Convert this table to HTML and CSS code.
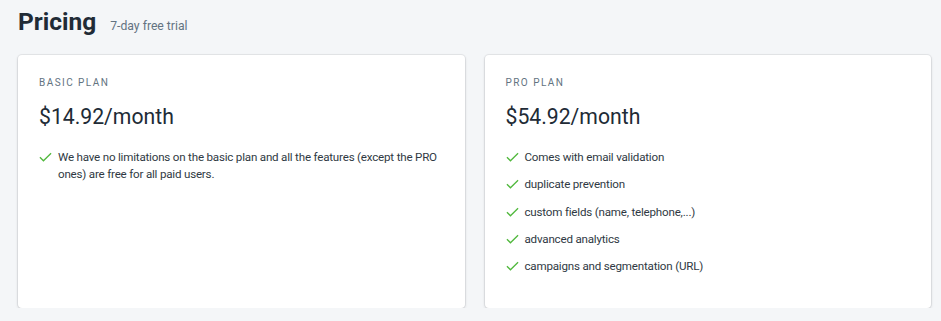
FILE: index.html
```html
<!DOCTYPE html>
<html lang="en">
<head>
<meta charset="utf-8">
<title>Pricing</title>
<link rel="stylesheet" href="styles.css">
</head>
<body>
<div class="page">
  <header class="head">
    <h1 class="title">Pricing</h1>
    <span class="subtitle">7-day free trial</span>
  </header>
  <div class="plans">
    <section class="card">
      <div class="plan-name">BASIC PLAN</div>
      <div class="price">$14.92/month</div>
      <ul class="features">
        <li><svg class="check" viewBox="0 0 14 10"><path d="M1 5.2 L4.8 9 L13 1" /></svg><span>We have no limitations on the basic plan and all the features (except the PRO ones) are free for all paid users.</span></li>
      </ul>
    </section>
    <section class="card">
      <div class="plan-name">PRO PLAN</div>
      <div class="price">$54.92/month</div>
      <ul class="features">
        <li><svg class="check" viewBox="0 0 14 10"><path d="M1 5.2 L4.8 9 L13 1" /></svg><span>Comes with email validation</span></li>
        <li><svg class="check" viewBox="0 0 14 10"><path d="M1 5.2 L4.8 9 L13 1" /></svg><span>duplicate prevention</span></li>
        <li><svg class="check" viewBox="0 0 14 10"><path d="M1 5.2 L4.8 9 L13 1" /></svg><span>custom fields (name, telephone,...)</span></li>
        <li><svg class="check" viewBox="0 0 14 10"><path d="M1 5.2 L4.8 9 L13 1" /></svg><span>advanced analytics</span></li>
        <li><svg class="check" viewBox="0 0 14 10"><path d="M1 5.2 L4.8 9 L13 1" /></svg><span>campaigns and segmentation (URL)</span></li>
      </ul>
    </section>
  </div>
</div>
</body>
</html>
```

FILE: styles.css
```css
html, body {
  margin: 0;
  padding: 0;
  background: #f4f6f8;
  font-family: Roboto, "Noto Sans", sans-serif;
  color: #212b36;
}
.page {
  padding: 4px 10px 0 18px;
}
.head {
  display: flex;
  align-items: baseline;
  gap: 14px;
  height: 51px;
}
.title {
  margin: 0;
  font-size: 24.5px;
  font-weight: 700;
  line-height: 36px;
}
.subtitle {
  font-size: 12.2px;
  color: #637381;
}
.plans {
  display: grid;
  grid-template-columns: 1fr 1fr;
  gap: 20px;
}
.card {
  background: #fff;
  border-radius: 4px;
  box-shadow: 0 0 0 1px rgba(63,63,68,.07), 0 1px 3px 0 rgba(63,63,68,.2);
  padding: 20px 20px 20px 21px;
  height: 253px;
  box-sizing: border-box;
}
.plan-name {
  font-size: 10px;
  letter-spacing: 1.45px;
  line-height: 16px;
  color: #637381;
}
.price {
  margin-top: 12px;
  font-size: 21.2px;
  line-height: 28px;
  font-weight: 400;
}
.features {
  list-style: none;
  margin: 18px 0 0;
  padding: 0;
}
.features li {
  display: flex;
  align-items: flex-start;
  gap: 6px;
  font-size: 11.6px;
  letter-spacing: -0.2px;
  line-height: 17px;
  margin-bottom: 10.25px;
  color: #2f3943;
}
.check {
  flex: none;
  width: 13px;
  height: 10px;
  margin-top: 3px;
  fill: none;
  stroke: #50b83c;
  stroke-width: 1.4;
}
```
